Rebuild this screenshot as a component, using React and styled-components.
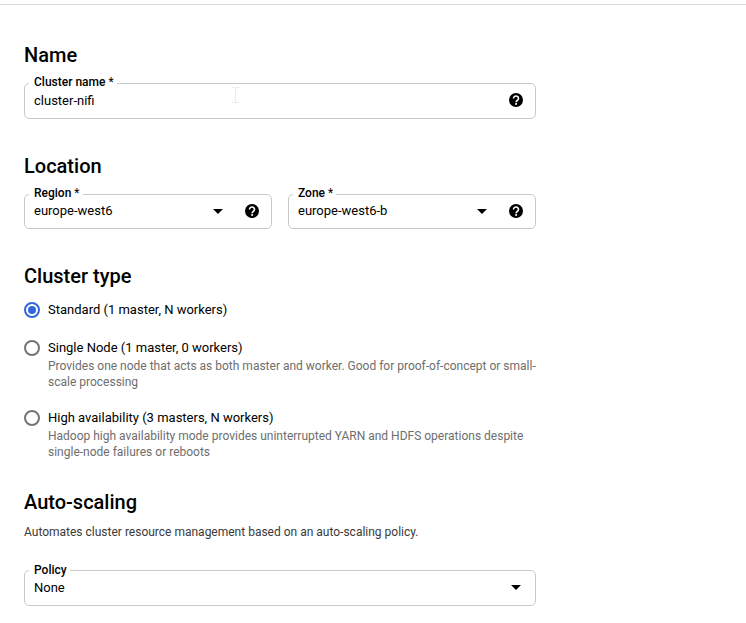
import React from "react";
import styled, { createGlobalStyle } from "styled-components";

const GlobalStyle = createGlobalStyle`
  * { box-sizing: border-box; }
  body {
    margin: 0;
    background: #fff;
    color: #000;
    font-family: Roboto, sans-serif;
    overflow: hidden;
  }
`;

const Page = styled.div`
  width: 100%;
  height: 623px;
  padding-top: 4px;
`;

const Panel = styled.main`
  border-top: 1px solid #dcdcdc;
  padding: 38px 24px 0;
`;

const Form = styled.form`
  width: 512px;
  display: flex;
  flex-direction: column;
`;

const Section = styled.section`
  margin-bottom: ${(p) => p.$gap}px;
`;

const Heading = styled.h2`
  margin: 0;
  font-size: 20px;
  font-weight: 500;
  line-height: 24px;
`;

const FieldRow = styled.div`
  display: flex;
  gap: 16px;
  margin-top: ${(p) => p.$top}px;
`;

const FieldBox = styled.div`
  position: relative;
  flex: 1;
  height: ${(p) => p.$height}px;
  display: flex;
  align-items: center;
  padding: 0 12px 1px 9px;
  border: 1px solid #c9c9c9;
  border-radius: 5px;
`;

const FieldLabel = styled.label`
  position: absolute;
  top: ${(p) => p.$top}px;
  left: 4px;
  padding: 0 3px 0 5px;
  background: #fff;
  font-size: 12px;
  font-weight: 500;
  line-height: 16px;
  white-space: nowrap;
`;

const Required = styled.span`
  font-weight: 400;
`;

const Value = styled.span`
  flex: 1;
  padding-bottom: ${(p) => (p.$compact ? "1px" : "0")};
  font-size: 13px;
  line-height: 20px;
`;

const HelpSvg = styled.svg`
  width: 14px;
  height: 14px;
  margin-left: 22px;
  margin-bottom: 1px;
`;

const ArrowSvg = styled.svg`
  width: 10px;
  height: 5px;
  margin-right: ${(p) => (p.$last ? "2px" : "0")};
`;

const CursorSvg = styled.svg`
  position: absolute;
  left: 206px;
  top: 3px;
  width: 9px;
  height: 17px;
`;

const Options = styled.div`
  display: flex;
  flex-direction: column;
  gap: 18px;
  margin-top: 12px;
`;

const Option = styled.div`
  display: grid;
  grid-template-columns: 16px 1fr;
  column-gap: 8px;
`;

const Radio = styled.span`
  width: 16px;
  height: 16px;
  margin-top: 2px;
  display: grid;
  place-items: center;
  border: 2px solid ${(p) => (p.$checked ? "#3367d6" : "#757575")};
  border-radius: 50%;

  &::after {
    content: "";
    width: 8px;
    height: 8px;
    border-radius: 50%;
    background: ${(p) => (p.$checked ? "#3367d6" : "transparent")};
  }
`;

const OptionLabel = styled.div`
  font-size: 13px;
  line-height: 20px;
`;

const OptionHint = styled.div`
  color: #6e6e6e;
  font-size: 12px;
  line-height: 16px;
  white-space: pre;
`;

const Description = styled.p`
  margin: 10px 0 0;
  color: #3a3a3a;
  font-size: 12px;
  line-height: 16px;
`;

const Help = () => (
  <HelpSvg viewBox="0 0 14 14">
    <circle cx="7" cy="7" r="7" />
    <path
      d="M4.500 5.400a2.500 2.350 0 1 1 4.100 1.800C7.700 7.900 7.100 8.200 7.100 9.300"
      fill="none"
      stroke="#fff"
      strokeWidth="1.600"
    />
    <rect x="6.200" y="10.100" width="1.800" height="1.700" fill="#fff" />
  </HelpSvg>
);

const Arrow = ({ last }) => (
  <ArrowSvg viewBox="0 0 10 5" $last={last}>
    <path d="M0 0h10L5 5z" />
  </ArrowSvg>
);

const TextCursor = () => (
  <CursorSvg viewBox="0 0 9 17" fill="none" stroke="#ececec">
    <path d="M1 .5h3M5 .5h3M4.500 1v15M1 15.500h3M5 15.500h3" />
  </CursorSvg>
);

function Field({ label, value, height = 36, labelTop = -10, required, select, help, children }) {
  return (
    <FieldBox $height={height}>
      <FieldLabel $top={labelTop}>
        {label}
        {required && <Required> *</Required>}
      </FieldLabel>
      <Value $compact={height < 36}>{value}</Value>
      {children}
      {select && <Arrow last={!help} />}
      {help && <Help />}
    </FieldBox>
  );
}

const clusterTypes = [
  { label: "Standard (1 master, N workers)", checked: true },
  {
    label: "Single Node (1 master, 0 workers)",
    hint: "Provides one node that acts as both master and worker. Good for proof-of-concept or small-\nscale processing",
  },
  {
    label: "High availability (3 masters, N workers)",
    hint: "Hadoop high availability mode provides uninterrupted YARN and HDFS operations despite\nsingle-node failures or reboots",
  },
];

export default function App() {
  return (
    <Page>
      <GlobalStyle />
      <Panel>
        <Form>
          <Section $gap={35}>
            <Heading>Name</Heading>
            <FieldRow $top={16}>
              <Field label="Cluster name" value="cluster-nifi" required help>
                <TextCursor />
              </Field>
            </FieldRow>
          </Section>
          <Section $gap={35}>
            <Heading>Location</Heading>
            <FieldRow $top={16}>
              <Field label="Region" value="europe-west6" height={35} required select help />
              <Field label="Zone" value="europe-west6-b" height={35} required select help />
            </FieldRow>
          </Section>
          <Section $gap={30}>
            <Heading>Cluster type</Heading>
            <Options>
              {clusterTypes.map((type) => (
                <Option key={type.label}>
                  <Radio $checked={type.checked} />
                  <div>
                    <OptionLabel>{type.label}</OptionLabel>
                    {type.hint && <OptionHint>{type.hint}</OptionHint>}
                  </div>
                </Option>
              ))}
            </Options>
          </Section>
          <Section $gap={0}>
            <Heading>Auto-scaling</Heading>
            <Description>
              Automates cluster resource management based on an auto-scaling policy.
            </Description>
            <FieldRow $top={30}>
              <Field label="Policy" value="None" labelTop={-9} select />
            </FieldRow>
          </Section>
        </Form>
      </Panel>
    </Page>
  );
}
